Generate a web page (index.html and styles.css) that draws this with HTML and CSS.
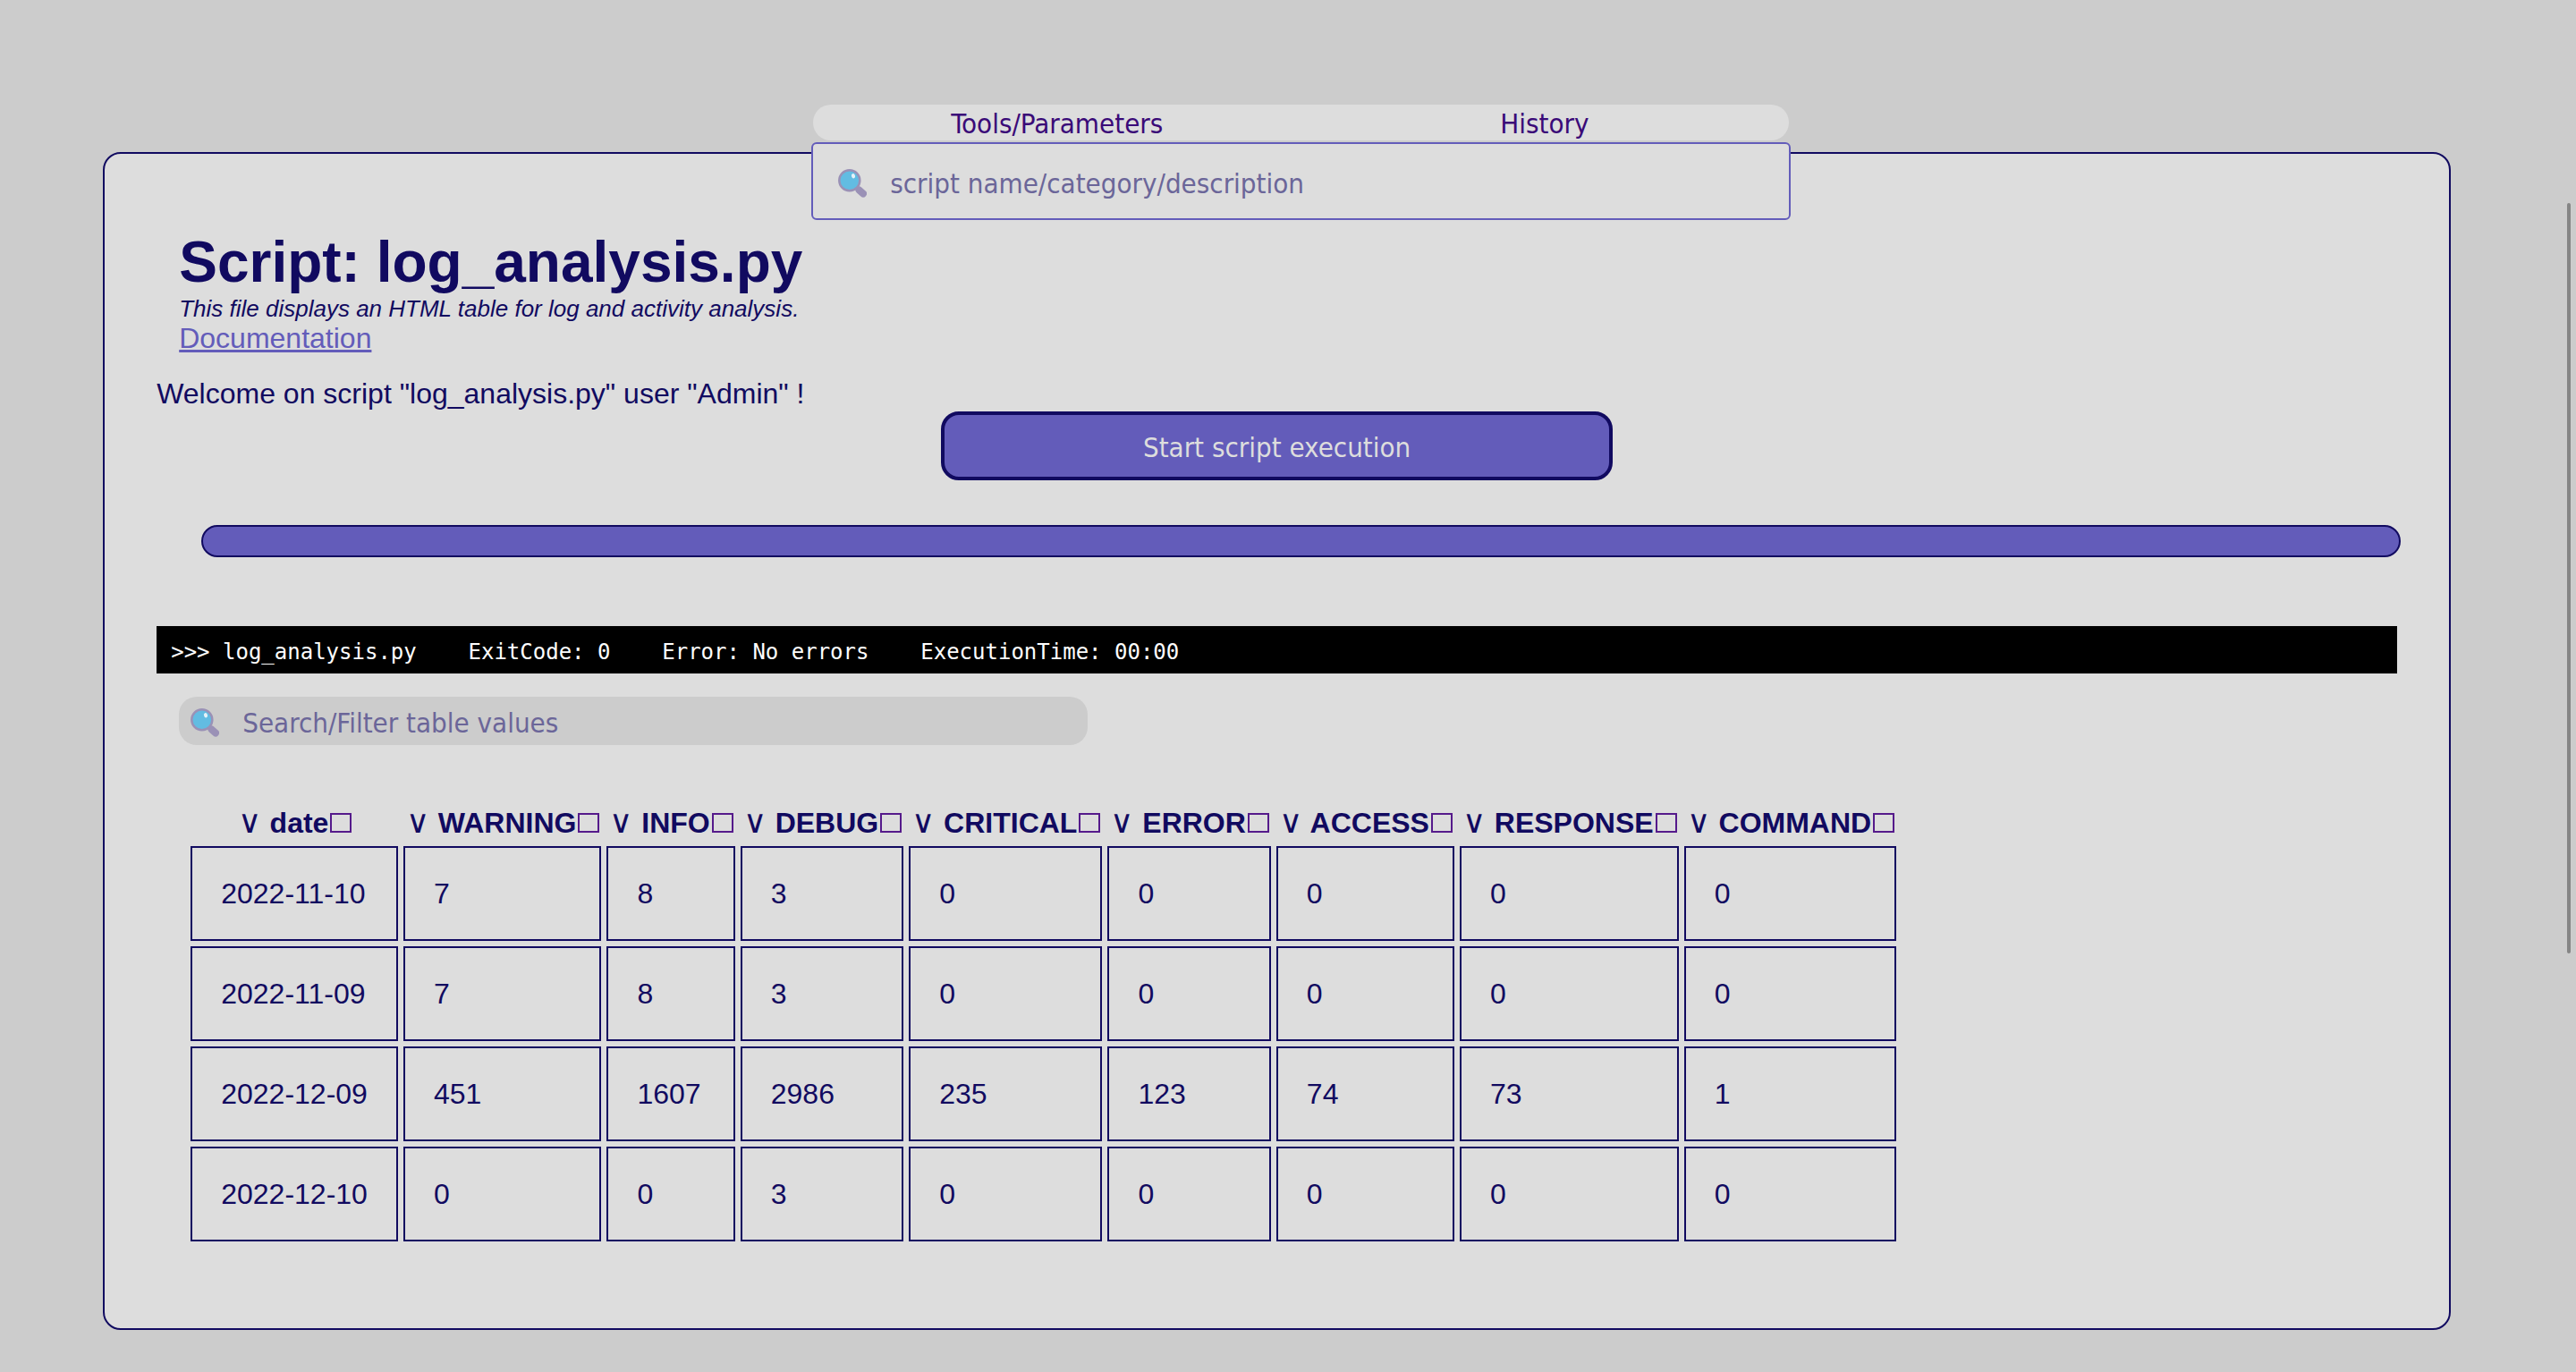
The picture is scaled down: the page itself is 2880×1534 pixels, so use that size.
FILE: index.html
```html
<!DOCTYPE html>
<html lang="en">
<head>
<meta charset="utf-8">
<title>log_analysis.py</title>
<link rel="stylesheet" href="styles.css">
</head>
<body>
<svg class="sprite" aria-hidden="true">
  <symbol id="magnifier" viewBox="0 0 32 32">
    <path d="M20.500 20.500L28 28" stroke="#9a91b6" stroke-width="3" stroke-linecap="round"/>
    <path d="M23.500 23.500L28 27.500" stroke="#9a91b6" stroke-width="8" stroke-linecap="round"/>
    <circle cx="12.800" cy="12.800" r="11.500" fill="#62bce2" stroke="#9a91b6" stroke-width="2.500"/>
    <ellipse cx="17" cy="7.700" rx="2" ry="2.700" fill="#e6f2f8" transform="rotate(-20 17 7.700)"/>
  </symbol>
</svg>

<header class="topbar">
  <nav class="menu">
    <a href="#tools">Tools/Parameters</a>
    <a href="#history">History</a>
  </nav>
  <label class="search">
    <svg class="icon" aria-hidden="true"><use href="#magnifier"/></svg>
    <input type="text" placeholder="script name/category/description" aria-label="Search scripts">
  </label>
</header>

<main class="panel">
  <section class="intro">
    <h1>Script: log_analysis.py</h1>
    <p class="description">This file displays an HTML table for log and activity analysis.</p>
    <a class="doc" href="#doc">Documentation</a>
  </section>
  <p class="welcome">Welcome on script "log_analysis.py" user "Admin" !</p>
  <button class="start" type="button">Start script execution</button>
  <div class="progress" role="progressbar" aria-label="Execution progress"></div>
  <pre class="console">&gt;&gt;&gt; log_analysis.py    ExitCode: 0    Error: No errors    ExecutionTime: 00:00</pre>
  <label class="filter">
    <svg class="icon" aria-hidden="true"><use href="#magnifier"/></svg>
    <input type="text" placeholder="Search/Filter table values" aria-label="Filter table">
  </label>
  <table class="logs">
    <thead>
      <tr>
        <th><span class="sort">∨</span> date<a class="box" href="#date" aria-label="date"></a></th>
        <th><span class="sort">∨</span> WARNING<a class="box" href="#warning" aria-label="warning"></a></th>
        <th><span class="sort">∨</span> INFO<a class="box" href="#info" aria-label="info"></a></th>
        <th><span class="sort">∨</span> DEBUG<a class="box" href="#debug" aria-label="debug"></a></th>
        <th><span class="sort">∨</span> CRITICAL<a class="box" href="#critical" aria-label="critical"></a></th>
        <th><span class="sort">∨</span> ERROR<a class="box" href="#error" aria-label="error"></a></th>
        <th><span class="sort">∨</span> ACCESS<a class="box" href="#access" aria-label="access"></a></th>
        <th><span class="sort">∨</span> RESPONSE<a class="box" href="#response" aria-label="response"></a></th>
        <th><span class="sort">∨</span> COMMAND<a class="box" href="#command" aria-label="command"></a></th>
      </tr>
    </thead>
    <tbody>
      <tr><td>2022-11-10</td><td>7</td><td>8</td><td>3</td><td>0</td><td>0</td><td>0</td><td>0</td><td>0</td></tr>
      <tr><td>2022-11-09</td><td>7</td><td>8</td><td>3</td><td>0</td><td>0</td><td>0</td><td>0</td><td>0</td></tr>
      <tr><td>2022-12-09</td><td>451</td><td>1607</td><td>2986</td><td>235</td><td>123</td><td>74</td><td>73</td><td>1</td></tr>
      <tr><td>2022-12-10</td><td>0</td><td>0</td><td>3</td><td>0</td><td>0</td><td>0</td><td>0</td><td>0</td></tr>
    </tbody>
  </table>
</main>
<div class="scrollbar"></div>
</body>
</html>
```
FILE: styles.css
```css
:root {
  --navy: #110a60;
  --violet: #635cba;
  --surface: #dddddd;
  --page: #cccccc;
  --ui: "DejaVu Sans Condensed", "Noto Sans", sans-serif;
}

* { box-sizing: border-box; }

body {
  margin: 0;
  position: relative;
  display: flow-root;
  min-height: 100vh;
  background: var(--page);
  color: var(--navy);
  font: 32px/36px "Liberation Sans", Arial, sans-serif;
}

h1, p, pre { margin: 0; }

.sprite { position: absolute; width: 0; height: 0; }
.icon { flex: none; width: 32px; height: 32px; }

/* Navigation floats over the top edge of the panel */
.topbar {
  position: absolute;
  z-index: 1;
  top: 117px;
  left: 31.5%;
  width: 38%;
  display: flex;
  flex-direction: column;
  gap: 2px;
}
.menu {
  display: grid;
  grid-template-columns: 1fr 1fr;
  margin: 0 2px;
  padding-top: 2px;
  border-radius: 20px;
  background: var(--surface);
  line-height: 38px;
  text-align: center;
}
.menu a {
  color: #3a0a78;
  font-family: var(--ui);
  font-size: 31px;
  text-decoration: none;
}
.search, .filter { display: flex; align-items: center; }
.search {
  gap: 26px;
  height: 87px;
  padding: 4px 28px 0;
  border: 2px solid var(--violet);
  border-radius: 6px;
  background: var(--surface);
}
input {
  flex: 1;
  min-width: 0;
  height: 40px;
  padding: 0;
  border: 0;
  outline: 0;
  background: none;
  color: var(--navy);
  font: 31px var(--ui);
}
input::placeholder { color: #6b6699; opacity: 1; }

.panel {
  margin: 170px 140px 0 4%;
  padding: 84px 58px 91px;
  border: 2px solid var(--navy);
  border-radius: 20px;
  background: var(--surface);
}
.intro { padding-left: 25px; }
h1 { font-size: 64px; line-height: 74px; }
.description { font-size: 26px; line-height: 30px; font-style: italic; }
.doc { display: block; width: max-content; color: var(--violet); }
.welcome { margin-top: 26px; padding-bottom: 2px; }

.start {
  display: block;
  width: 30%;
  height: 77px;
  margin: 0 auto;
  padding-top: 4px;
  border: 4px solid var(--navy);
  border-radius: 20px;
  background: var(--violet);
  color: var(--surface);
  font: 31px var(--ui);
}
.progress {
  height: 36px;
  margin: 50px -4px 0 50px;
  border: 2px solid var(--navy);
  border-radius: 18px;
  background: var(--violet);
}
.console {
  margin-top: 77px;
  padding: 14px 16px 9px;
  background: #000;
  color: #fff;
  font: 24px/30px "DejaVu Sans Mono", monospace;
}
.filter {
  gap: 26px;
  width: 1016px;
  max-width: 100%;
  height: 54px;
  margin: 26px 0 0 25px;
  padding: 4px 13px 0;
  border-radius: 20px;
  background: var(--page);
}

.logs {
  margin: 61px 0 0 32px;
  border-collapse: separate;
  border-spacing: 6px;
}
.logs th {
  padding: 1px 2px;
  line-height: 38px;
  white-space: nowrap;
}
.logs td {
  padding: 32px;
  border: 2px solid var(--navy);
  line-height: 38px;
}
.sort {
  display: inline-block;
  width: 28px;
  font-family: "DejaVu Sans", sans-serif;
  font-size: 36px;
  font-weight: 200;
  line-height: 36px;
}
.box {
  display: inline-block;
  width: 24px;
  height: 22px;
  margin-left: 2px;
  border: 2px solid #551a8b;
}

.scrollbar {
  position: absolute;
  top: 227px;
  right: 6px;
  width: 4px;
  height: 839px;
  border-radius: 2px;
  background: #858585;
}
```
